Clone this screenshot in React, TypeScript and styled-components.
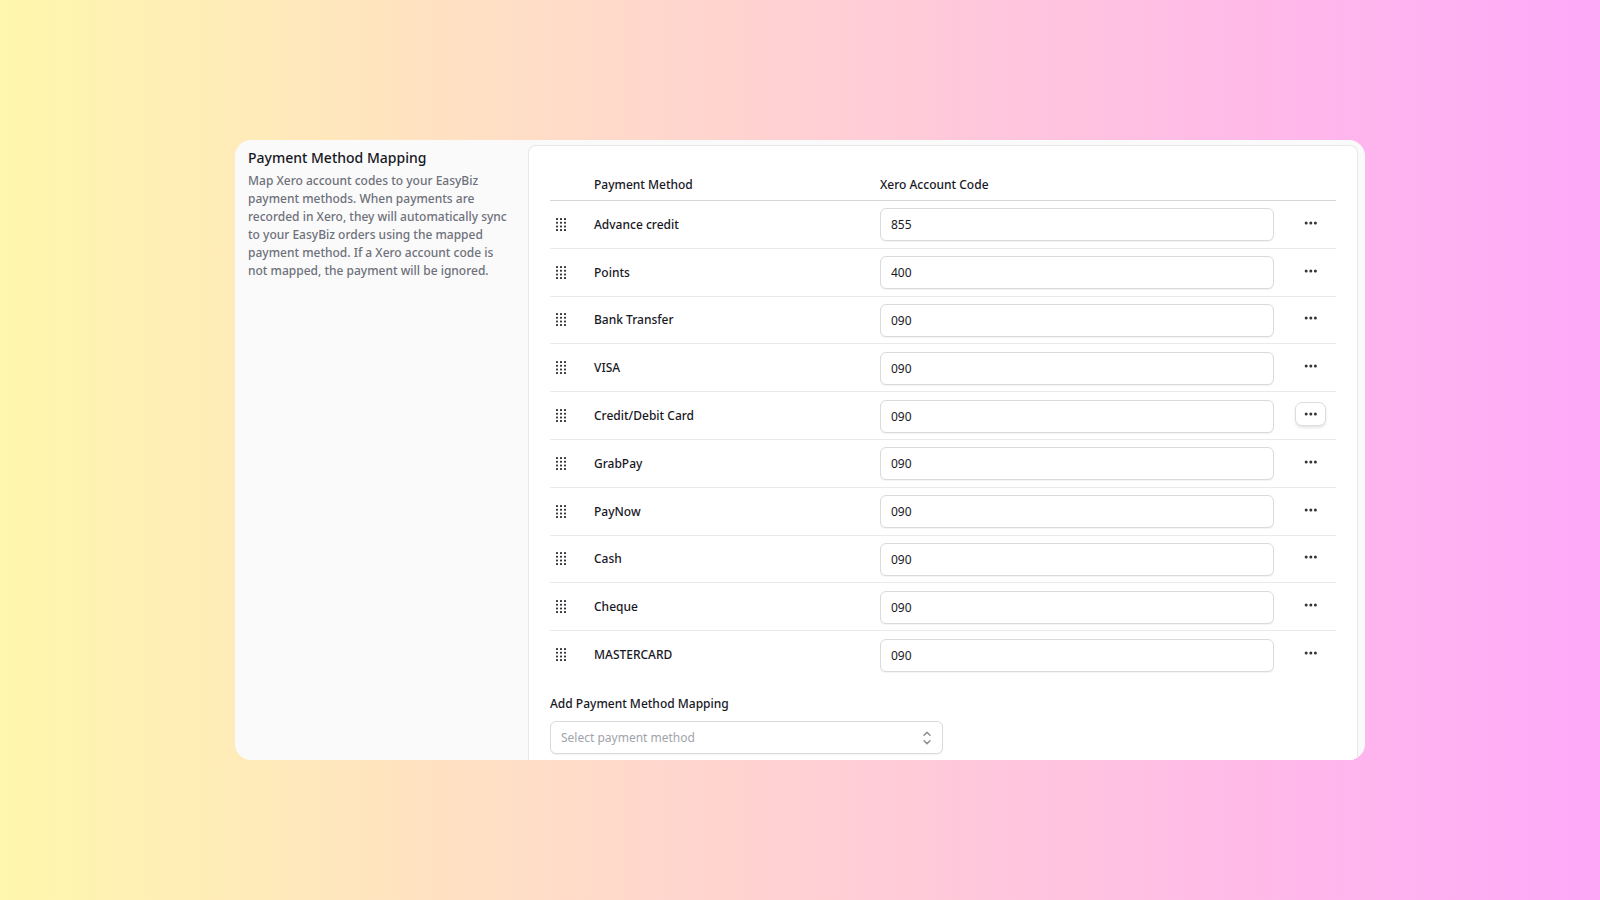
import React from "react";
import styled, { createGlobalStyle, css } from "styled-components";

const GlobalStyle = createGlobalStyle`
  *, *::before, *::after { box-sizing: border-box; }
  body {
    margin: 0;
    font-family: "Noto Sans", "Segoe UI", sans-serif;
    font-size: 12px;
    line-height: 18px;
    color: #18181f;
  }
  button, input, select { font: inherit; color: inherit; }
`;

const Page = styled.main`
  display: flex;
  align-items: center;
  min-height: 100vh;
  padding: 24px clamp(16px, calc(50vw - 565px), 235px);
  background: linear-gradient(90deg, #fff7ad, #ffa9f9);
`;

const Card = styled.section`
  display: flex;
  flex: 1;
  min-width: 0;
  gap: 16px;
  padding: 5px 7px 0 13px;
  background: #fafafb;
  border-radius: 16px;
  overflow: hidden;
`;

const Intro = styled.header`
  flex: 0 0 264px;
  padding-top: 2px;
`;

const Title = styled.h2`
  margin: 0 0 3px;
  font-size: 14px;
  font-weight: 500;
  line-height: 22px;
`;

const Description = styled.p`
  margin: 0;
  font-weight: 500;
  color: #6e717a;
`;

const Panel = styled.div`
  flex: 1;
  min-width: 0;
  padding: 26px 21px 6px;
  background: #ffffff;
  border: 1px solid #e7e8ea;
  border-bottom: 0;
  border-radius: 8px 8px 0 0;
`;

const MappingTable = styled.table`
  width: 100%;
  height: 506px;
  table-layout: fixed;
  border-collapse: separate;
  border-spacing: 0;
`;

const HeadCell = styled.th<{ $width?: string }>`
  width: ${(p) => p.$width ?? "auto"};
  height: 29px;
  padding: 0 0 2px;
  border-bottom: 1px solid #d5d6da;
  font-weight: 500;
  text-align: left;
`;

const Cell = styled.td`
  padding: 7px 0 6px;
  font-weight: 500;
  vertical-align: middle;
`;

const Row = styled.tr`
  &:not(:last-child) > ${Cell} { border-bottom: 1px solid #e9eaec; }
`;

const fieldFrame = css`
  display: block;
  width: 100%;
  height: 33px;
  padding: 0 10px;
  background: #ffffff;
  border: 1px solid #d9dadd;
  border-radius: 6px;
  box-shadow: 0 1px 1px rgba(0, 0, 0, 0.05);
  outline: none;
`;

const CodeInput = styled.input`
  ${fieldFrame}
  font-weight: 400;
`;

const HandleButton = styled.button`
  display: flex;
  padding: 2px 6px;
  background: none;
  border: 0;
  cursor: grab;
`;

const MoreButton = styled.button<{ $active: boolean }>`
  display: flex;
  align-items: center;
  justify-content: center;
  width: 31px;
  height: 24px;
  margin: 0 10px 4px auto;
  padding: 0;
  background: transparent;
  border: 1px solid transparent;
  border-radius: 7px;
  cursor: pointer;
  ${(p) =>
    p.$active &&
    css`
      background: #ffffff;
      border-color: #dcdde0;
      box-shadow: 0 2px 3px rgba(0, 0, 0, 0.1);
    `}
`;

const AddField = styled.div`
  width: 50%;
  margin-top: 17px;
`;

const AddLabel = styled.label`
  display: block;
  margin-bottom: 8px;
  font-weight: 500;
`;

const SelectWrap = styled.div`
  display: grid;
  align-items: center;
  > * { grid-area: 1 / 1; }
  > svg { justify-self: end; margin-right: 11px; pointer-events: none; }
`;

const MethodSelect = styled.select`
  ${fieldFrame}
  appearance: none;
  color: #a1a3ab;
`;

const mappings = [
  { method: "Advance credit", code: "855" },
  { method: "Points", code: "400" },
  { method: "Bank Transfer", code: "090" },
  { method: "VISA", code: "090" },
  { method: "Credit/Debit Card", code: "090", active: true },
  { method: "GrabPay", code: "090" },
  { method: "PayNow", code: "090" },
  { method: "Cash", code: "090" },
  { method: "Cheque", code: "090" },
  { method: "MASTERCARD", code: "090" },
];

const GripIcon = () => (
  <svg width="10" height="14" viewBox="0 0 10 14" fill="#34343c" aria-hidden="true">
    {[0, 3.7, 7.4, 11.1].map((y) =>
      [0, 4, 8].map((x) => <rect key={`${x}-${y}`} x={x} y={y} width="2" height="2" rx="0.6" />),
    )}
  </svg>
);

const DotsIcon = () => (
  <svg width="14" height="4" viewBox="0 0 14 4" fill="#34343c" aria-hidden="true">
    <circle cx="2.2" cy="2" r="1.5" />
    <circle cx="6.8" cy="2" r="1.5" />
    <circle cx="11.4" cy="2" r="1.5" />
  </svg>
);

const ChevronsIcon = () => (
  <svg width="10" height="14" viewBox="0 0 10 14" fill="none" stroke="#8f9199" strokeWidth="1.5" strokeLinecap="round" strokeLinejoin="round" aria-hidden="true">
    <path d="M2 4.2 5 1.4l3 2.8M2 9.8l3 2.8 3-2.8" />
  </svg>
);

export default function App() {
  return (
    <>
      <GlobalStyle />
      <Page>
        <Card>
          <Intro>
            <Title>Payment Method Mapping</Title>
            <Description>
              Map Xero account codes to your EasyBiz payment methods. When payments are recorded in
              Xero, they will automatically sync to your EasyBiz orders using the mapped payment
              method. If a Xero account code is not mapped, the payment will be ignored.
            </Description>
          </Intro>
          <Panel>
            <MappingTable>
              <thead>
                <tr>
                  <HeadCell $width="44px" />
                  <HeadCell $width="286px">Payment Method</HeadCell>
                  <HeadCell>Xero Account Code</HeadCell>
                  <HeadCell $width="62px" />
                </tr>
              </thead>
              <tbody>
                {mappings.map(({ method, code, active }) => (
                  <Row key={method}>
                    <Cell>
                      <HandleButton type="button" aria-label={`Reorder ${method}`}>
                        <GripIcon />
                      </HandleButton>
                    </Cell>
                    <Cell>{method}</Cell>
                    <Cell>
                      <CodeInput aria-label={`Xero account code for ${method}`} defaultValue={code} />
                    </Cell>
                    <Cell>
                      <MoreButton type="button" $active={!!active} aria-label={`Options for ${method}`}>
                        <DotsIcon />
                      </MoreButton>
                    </Cell>
                  </Row>
                ))}
              </tbody>
            </MappingTable>
            <AddField>
              <AddLabel htmlFor="add-method">Add Payment Method Mapping</AddLabel>
              <SelectWrap>
                <MethodSelect id="add-method" defaultValue="">
                  <option value="">Select payment method</option>
                  {mappings.map(({ method }) => (
                    <option key={method}>{method}</option>
                  ))}
                </MethodSelect>
                <ChevronsIcon />
              </SelectWrap>
            </AddField>
          </Panel>
        </Card>
      </Page>
    </>
  );
}
